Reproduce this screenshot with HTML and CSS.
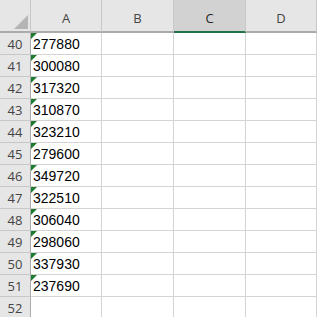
FILE: index.html
```html
<!DOCTYPE html>
<html>
<head>
<meta charset="utf-8">
<link rel="stylesheet" href="styles.css">
</head>
<body>
<div class="sheet">
  <div class="corner"><span class="tri"></span></div>
  <div class="colhead">A</div>
  <div class="colhead">B</div>
  <div class="colhead sel">C</div>
  <div class="colhead">D</div>

  <div class="rowhead">40</div><div class="cell num">277880</div><div class="cell"></div><div class="cell"></div><div class="cell"></div>
  <div class="rowhead">41</div><div class="cell num">300080</div><div class="cell"></div><div class="cell"></div><div class="cell"></div>
  <div class="rowhead">42</div><div class="cell num">317320</div><div class="cell"></div><div class="cell"></div><div class="cell"></div>
  <div class="rowhead">43</div><div class="cell num">310870</div><div class="cell"></div><div class="cell"></div><div class="cell"></div>
  <div class="rowhead">44</div><div class="cell num">323210</div><div class="cell"></div><div class="cell"></div><div class="cell"></div>
  <div class="rowhead">45</div><div class="cell num">279600</div><div class="cell"></div><div class="cell"></div><div class="cell"></div>
  <div class="rowhead">46</div><div class="cell num">349720</div><div class="cell"></div><div class="cell"></div><div class="cell"></div>
  <div class="rowhead">47</div><div class="cell num">322510</div><div class="cell"></div><div class="cell"></div><div class="cell"></div>
  <div class="rowhead">48</div><div class="cell num">306040</div><div class="cell"></div><div class="cell"></div><div class="cell"></div>
  <div class="rowhead">49</div><div class="cell num">298060</div><div class="cell"></div><div class="cell"></div><div class="cell"></div>
  <div class="rowhead">50</div><div class="cell num">337930</div><div class="cell"></div><div class="cell"></div><div class="cell"></div>
  <div class="rowhead">51</div><div class="cell num">237690</div><div class="cell"></div><div class="cell"></div><div class="cell"></div>
  <div class="rowhead">52</div><div class="cell"></div><div class="cell"></div><div class="cell"></div><div class="cell"></div>
</div>
</body>
</html>
```
FILE: styles.css
```css
html, body {
  margin: 0;
  padding: 0;
  background: #ffffff;
  overflow: hidden;
}
.sheet {
  display: grid;
  grid-template-columns: 31px 71px 72px 72px 71px;
  grid-template-rows: 33px repeat(13, 22px);
  width: 317px;
}
.sheet > div {
  box-sizing: border-box;
  border-right: 1px solid #d4d4d4;
  border-bottom: 1px solid #d4d4d4;
}
.corner {
  position: relative;
  background: #e6e6e6;
  border-right-color: #c8c8c8 !important;
  border-bottom: 2px solid #ababab !important;
}
.tri {
  position: absolute;
  right: 2px;
  bottom: 2px;
  width: 0;
  height: 0;
  border-left: 14px solid transparent;
  border-bottom: 14px solid #b4b4b4;
}
.colhead {
  background: #e6e6e6;
  border-right-color: #c8c8c8 !important;
  border-bottom: 2px solid #ababab !important;
  font-family: "Open Sans", "Noto Sans", sans-serif;
  font-size: 13px;
  color: #444444;
  display: flex;
  align-items: center;
  justify-content: center;
  padding-top: 4px;
}
.colhead.sel {
  background: #d2d2d2;
  color: #262626;
  border-bottom: 2px solid #217346 !important;
}
.rowhead {
  background: #e6e6e6;
  border-right-color: #ababab !important;
  border-bottom-color: #c8c8c8 !important;
  font-family: "Open Sans", "Noto Sans", sans-serif;
  font-size: 13px;
  color: #444444;
  display: flex;
  align-items: center;
  justify-content: center;
}
.cell {
  position: relative;
}
.num {
  font-family: "Liberation Sans", Arial, sans-serif;
  font-size: 14px;
  color: #000000;
  padding-left: 2px;
  display: flex;
  align-items: center;
}
.num::before {
  content: "";
  position: absolute;
  left: 0;
  top: 0;
  width: 0;
  height: 0;
  border-top: 6px solid #1f7a32;
  border-right: 6px solid transparent;
}
```
